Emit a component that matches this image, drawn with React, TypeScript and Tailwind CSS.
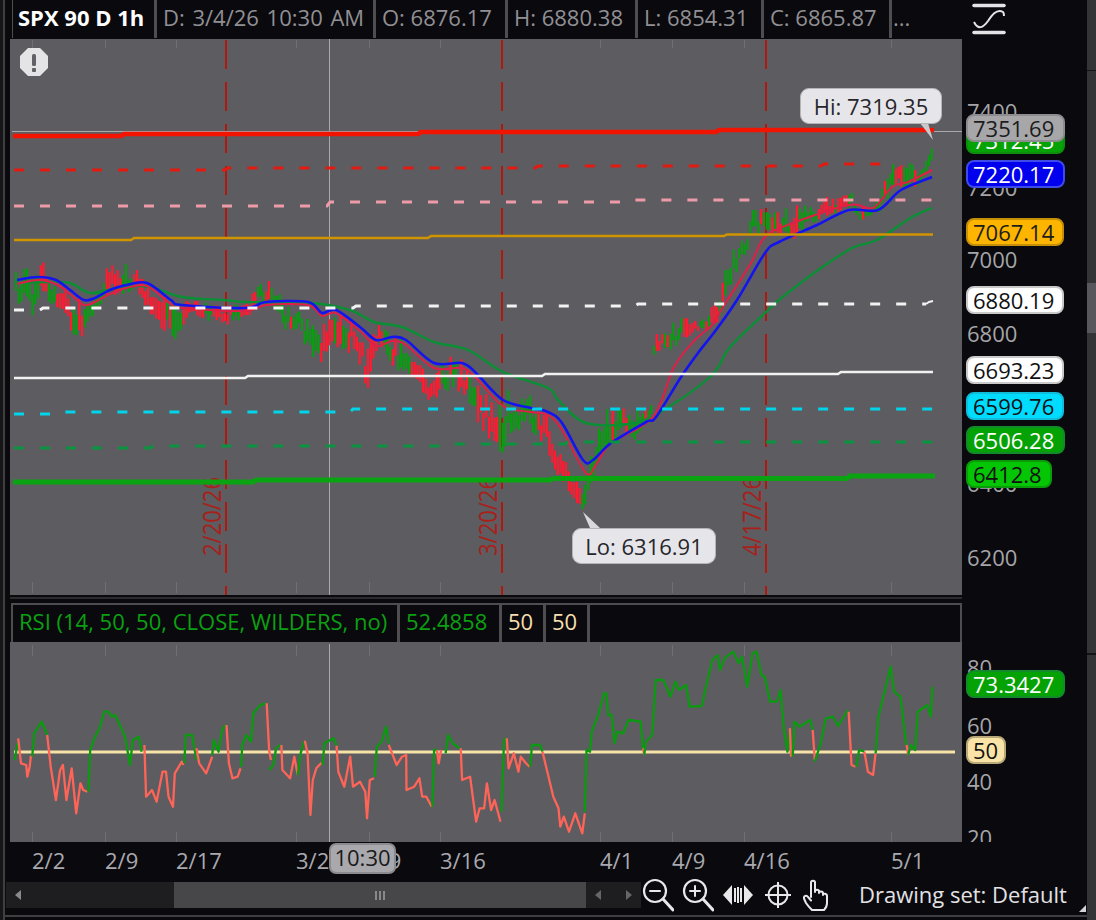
import React from "react";

type P = [number, number];
const smooth = (pts: P[]) => {
  let d = `M${pts[0][0]} ${pts[0][1]}`;
  for (let i = 0; i < pts.length - 1; i++) {
    const p0 = pts[Math.max(0, i - 1)];
    const p1 = pts[i];
    const p2 = pts[i + 1];
    const p3 = pts[Math.min(pts.length - 1, i + 2)];
    const c1x = p1[0] + (p2[0] - p0[0]) / 6;
    const c1y = p1[1] + (p2[1] - p0[1]) / 6;
    const c2x = p2[0] - (p3[0] - p1[0]) / 6;
    const c2y = p2[1] - (p3[1] - p1[1]) / 6;
    d += ` C${c1x.toFixed(1)} ${c1y.toFixed(1)} ${c2x.toFixed(1)} ${c2y.toFixed(1)} ${p2[0]} ${p2[1]}`;
  }
  return d;
};
const steps = (segs: [number, number][], start = 14) => {
  let out = "";
  let x = start;
  segs.forEach(([end, y], i) => {
    out += `${i ? "L" : "M"}${x} ${y} L${end} ${y} `;
    x = end + 3;
  });
  return out;
};

const BLUE: P[] = [[17,280],[38,277],[56,280],[70,290],[84,300],[95,298],[110,290],[126,285],[147,283],[171,300],[182,305],[245,308],[266,302],[308,302],[322,313],[336,310],[360,327],[376,340],[392,337],[406,340],[434,363],[462,363],[476,373],[503,400],[531,408],[548,412],[562,423],[583,460],[593,460],[611,443],[646,422],[656,417],[681,377],[698,353],[716,330],[737,300],[765,253],[779,242],[817,225],[849,210],[878,210],[901,190],[932,177]];
const CRIMSON: P[] = [[17,284],[38,280],[56,284],[70,294],[84,305],[95,302],[110,294],[126,288],[147,286],[171,304],[182,308],[245,311],[266,305],[308,305],[322,316],[336,313],[360,331],[376,346],[392,341],[406,345],[434,368],[462,368],[476,378],[503,406],[531,412],[548,415],[562,430],[586,473],[597,463],[611,443],[653,417],[674,367],[695,340],[712,325],[723,307],[751,263],[765,237],[793,223],[849,205],[873,208],[892,187],[908,182],[932,170]];
const GREEN: P[] = [[14,283],[45,282],[70,283],[91,293],[122,287],[150,287],[182,297],[224,300],[245,302],[311,303],[350,310],[374,322],[402,327],[434,342],[468,350],[503,372],[548,388],[558,400],[586,423],[635,423],[667,408],[712,375],[730,347],[765,313],[779,300],[814,273],[852,248],[877,240],[912,217],[932,208]];

const ENV: [number, number, number][] = [[16,272,300],[30,265,320],[45,262,300],[60,280,310],[75,290,340],[85,300,340],[95,290,310],[105,265,300],[120,262,295],[135,262,290],[148,275,310],[160,295,330],[175,300,340],[190,300,315],[210,300,322],[230,305,325],[250,295,315],[262,278,305],[270,280,300],[285,300,330],[300,305,330],[312,325,367],[320,320,365],[330,300,350],[345,305,350],[360,340,365],[368,345,395],[380,320,345],[395,330,370],[410,350,375],[425,365,400],[435,375,400],[450,352,390],[465,360,395],[478,385,425],[490,395,440],[503,385,455],[515,395,430],[530,395,430],[545,405,445],[555,430,470],[565,460,495],[578,480,505],[585,470,512],[592,450,480],[598,430,470],[605,408,450],[620,400,435],[635,400,440],[651,400,420],[654,335,355],[670,325,350],[685,315,340],[700,320,330],[715,300,330],[725,260,300],[740,240,265],[755,205,235],[765,208,235],[780,210,235],[795,205,240],[810,205,225],[830,195,215],[850,190,210],[860,205,220],[875,205,218],[885,180,205],[895,160,185],[905,160,190],[915,165,190],[925,160,175],[932,142,165]];

const envAt = (x: number): [number, number] => {
  for (let i = 0; i < ENV.length - 1; i++) {
    const a = ENV[i];
    const b = ENV[i + 1];
    if (x >= a[0] && x <= b[0]) {
      const t = (x - a[0]) / (b[0] - a[0]);
      return [a[1] + (b[1] - a[1]) * t, a[2] + (b[2] - a[2]) * t];
    }
  }
  return [ENV[ENV.length - 1][1], ENV[ENV.length - 1][2]];
};

const REDS: P[] = [[410, 440], [478, 498], [545, 582], [140, 165], [360, 368]];
const GREENS: P[] = [[584, 612], [725, 760], [312, 320], [95, 105], [928, 933]];
const within = (x: number, list: P[]) => list.some(([a, b]) => x >= a && x <= b);

const makeCandles = () => {
  let s = 12345;
  const rnd = () => {
    s = (s * 1664525 + 1013904223) >>> 0;
    return s / 4294967296;
  };
  const out: { x: number; top: number; h: number; up: boolean }[] = [];
  let up = false;
  for (let x = 16; x <= 932; x += 2.75) {
    const [t, b] = envAt(x);
    if (rnd() < 0.28) up = !up;
    const skew = rnd();
    const a1 = t + (b - t) * skew * 0.6;
    const a2 = b - (b - t) * (1 - skew) * 0.6 * rnd();
    const forced = within(x, REDS) ? false : within(x, GREENS) ? true : up;
    out.push({ x, top: a1, h: Math.max(3, a2 - a1), up: forced });
  }
  return out;
};
const CANDLES = makeCandles();

const R1: [string, number[]][] = [
  ["g",[42,480,50,430]],
  ["r",[52,415,60,490,75,495,78,530,85,500,88,470,92,470]],
  ["g",[92,470,98,400,110,380,120,365,135,405]],
  ["r",[135,405,145,500,160,600,172,510,180,495,190,600,205,505,218,640,230,550,238,570,250,575]],
  ["g",[253,575,258,450,270,415,285,385,298,335,310,335,320,350,330,345,345,380,358,410,372,495,380,420,397,410,405,455]],
  ["r",[413,435,418,590,435,570,448,605,465,515,475,515,482,590,495,620,500,520,520,485,525,495]],
  ["g",[527,490,532,405,550,405,562,480]],
  ["r",[562,445,570,490,590,520,607,470]],
  ["g",[607,465,612,420,625,455,635,390,645,375]],
  ["r",[648,375,655,490,665,535,680,530,688,505]],
  ["g",[690,500,693,435,705,405,718,425,725,340,745,315,762,310]],
  ["r",[763,310,770,450,775,480]],
  ["g",[770,510,782,495,790,445,802,435]],
  ["r",[805,435,808,510,830,535,842,470,852,525]],
  ["g",[852,525,860,460,870,425]],
  ["r",[872,422,880,460,888,645,895,540,905,505,920,488]],
  ["g",[923,495,928,430,945,420,955,415,963,437]],
  ["r",[963,437,968,515,985,560,1002,470,1010,560,1030,545,1045,575,1050,655,1058,540,1070,535]],
  ["g",[1072,530,1078,440,1092,425,1105,380,1112,430]],
  ["r",[1112,435,1135,495,1150,470,1162,465,1163,570,1185,560,1200,535,1208,590,1220,590,1235,620]],
  ["g",[1237,620,1242,450,1250,450]],
  ["r",[1250,450,1255,490,1262,450]],
  ["g",[1275,460,1282,405,1295,430,1315,445]],
  ["r",[1318,445,1322,540,1345,530,1362,665,1372,625,1385,625,1393,550,1405,630,1415,600,1432,665]],
  ["g",[1435,635,1442,420,1450,415]],
  ["r",[1450,415,1455,505,1470,460,1483,515,1490,470,1505,490,1515,500]],
  ["g",[1517,500,1522,435,1545,435,1552,455]],
  ["r",[1552,455,1568,525]],
];
const R2: [string, number[]][] = [
  ["r",[0,525,15,590,30,625,35,680,45,650,60,695,78,640,98,700,105,640]],
  ["g",[105,635,110,450,120,455,125,395,145,340,160,280,167,280,172,345,182,345,190,430,198,395,215,400,230,360,265,365,272,450]],
  ["r",[272,445,275,465]],
  ["g",[275,465,280,425,298,405,308,240,330,240,350,290,365,245,375,270,395,255,405,320,440,318,450,270,470,180,485,165,492,210,505,175,530,155,545,190,555,170,570,260,585,160,597,155,610,225,620,230,635,305,655,305,665,270,675,390,685,455,692,385]],
  ["r",[692,385,695,470]],
  ["g",[700,470,705,365,720,380,750,360,757,390]],
  ["r",[757,390,763,480]],
  ["g",[763,485,780,430,795,355,815,350,830,378,858,330]],
  ["r",[860,335,868,495,880,500]],
  ["g",[882,500,890,450,905,455]],
  ["r",[905,455,915,515,930,525,937,460]],
  ["g",[937,460,945,350,965,265,980,200,990,275,1008,290,1025,435]],
  ["r",[1026,435,1030,465]],
  ["g",[1030,465,1038,435,1050,450,1058,335,1085,315,1095,350,1100,260]],
];
const toPts = (a: number[], off: number) => {
  let d = "";
  for (let i = 0; i < a.length; i += 2) {
    d += `${i ? "L" : "M"}${((a[i] + off) / 2.861).toFixed(1)} ${(600 + a[i + 1] / 3).toFixed(1)} `;
  }
  return d;
};

const TICKS = [32, 105, 176, 296, 369, 440, 600, 672, 744, 891];

const PriceChart = () => (
  <svg className="block w-[952px] h-[556px]" viewBox="10 39 952 556">
    <defs>
      <clipPath id="vtext"><rect x="10" y="476" width="952" height="100" /></clipPath>
    </defs>
    {TICKS.map((x) => (
      <g key={x} stroke="#706f73" strokeWidth="1">
        <line x1={x + 0.5} x2={x + 0.5} y1="40" y2="48" />
        <line x1={x + 0.5} x2={x + 0.5} y1="582" y2="593" />
      </g>
    ))}
    {[226, 502, 766].map((x) => (
      <line key={x} x1={x} x2={x} y1="40" y2="595" stroke="#b0180e" strokeWidth="2" strokeDasharray="29 13" />
    ))}
    <line x1="329.5" x2="329.5" y1="39" y2="595" stroke="#a9a9ac" strokeWidth="1" />
    <g clipPath="url(#vtext)" fill="#a9201a" fontFamily="'Open Sans', sans-serif" fontSize="22">
      <text transform="translate(221 556) rotate(-90) scale(1 1.14)">2/20/26</text>
      <text transform="translate(497 556) rotate(-90) scale(1 1.14)">3/20/26</text>
      <text transform="translate(761 556) rotate(-90) scale(1 1.14)">4/17/26</text>
    </g>
    {CANDLES.map((c) => (
      <rect key={c.x} x={c.x - 1.1} y={c.top} width="2.2" height={c.h} fill={c.up ? "#0a9c12" : "#ff1c30"} />
    ))}
    <path d={smooth(GREEN)} fill="none" stroke="#0a8f35" strokeWidth="2.4" />
    <path d={smooth(CRIMSON)} fill="none" stroke="#e01f48" strokeWidth="2" />
    <path d={smooth(BLUE)} fill="none" stroke="#1414f0" strokeWidth="2.6" />
    <line x1="12" x2="962" y1="131.5" y2="131.5" stroke="#a9a9ac" strokeWidth="1" />
    <path d={steps([[121,136],[418,134],[716,132],[934,130]], 13)} fill="none" stroke="#f21400" strokeWidth="4.6" />
    <path d={steps([[225,170],[535,168],[821,166],[892,164]])} fill="none" stroke="#e21a10" strokeWidth="3" strokeDasharray="10 16" />
    <path d={steps([[327,206],[622,202],[933,200]])} fill="none" stroke="#ee9aa8" strokeWidth="3" strokeDasharray="10 16" />
    <path d={steps([[131,240],[428,238],[724,236],[933,234.5]])} fill="none" stroke="#cf9400" strokeWidth="2.5" />
    <path d={steps([[40,310],[353,308],[635,306],[926,304]])} fill="none" stroke="#f2f2f2" strokeWidth="3" strokeDasharray="10 16" />
    <path d="M926 304 L929 302 L933 301" fill="none" stroke="#f2f2f2" strokeWidth="2" />
    <path d={steps([[245,378],[542,376],[838,374],[933,372]])} fill="none" stroke="#f2f2f2" strokeWidth="2.5" />
    <path d={steps([[50,414],[350,412],[933,409]])} fill="none" stroke="#00d4ea" strokeWidth="3" strokeDasharray="10 16" />
    <path d={steps([[150,448],[450,446],[565,444],[933,442]])} fill="none" stroke="#0a9440" strokeWidth="3" strokeDasharray="10 16" />
    <path d={steps([[253,482],[550,480],[847,478.5],[935,476]], 13)} fill="none" stroke="#0aa312" strokeWidth="5" />
    <path d="M920 123 L928 123 L933 140 Z" fill="#c9c9cd" />
    <path d="M590 528 L600 528 L583 512 Z" fill="#d9d9dd" />
    <polygon points="28,48 40,48 48,56 48,68 40,76 28,76 20,68 20,56" fill="#e4e4e7" />
    <rect x="32" y="54" width="4" height="12" rx="1.5" fill="#626165" />
    <rect x="32" y="68" width="4" height="4" rx="1" fill="#626165" />
  </svg>
);

const RsiChart = () => (
  <svg className="block w-[952px] h-[200px]" viewBox="10 642 952 200">
    {TICKS.map((x) => (
      <g key={x} stroke="#706f73" strokeWidth="1">
        <line x1={x + 0.5} x2={x + 0.5} y1="645" y2="656" />
        <line x1={x + 0.5} x2={x + 0.5} y1="832" y2="842" />
      </g>
    ))}
    <line x1="329.5" x2="329.5" y1="644" y2="842" stroke="#a9a9ac" strokeWidth="1" />
    <line x1="14" x2="955" y1="752" y2="752" stroke="#f6e3a8" strokeWidth="3" />
    {R1.map(([c, a], i) => (
      <path key={i} d={toPts(a, 0)} fill="none" stroke={c === "g" ? "#0a9a10" : "#ff6458"} strokeWidth="2.3" strokeLinejoin="round" />
    ))}
    {R2.map(([c, a], i) => (
      <path key={i} d={toPts(a, 1568)} fill="none" stroke={c === "g" ? "#0a9a10" : "#ff6458"} strokeWidth="2.3" strokeLinejoin="round" />
    ))}
  </svg>
);

const TAGS = [
  { t: "7312.45", c: "top-[126px] w-[99px] bg-[#06a306] border-[#0d8f0d] text-white" },
  { t: "7351.69", c: "top-[114px] w-[99px] bg-[#a7a6a9] border-[#8d8c90] text-[#1c1c1c]" },
  { t: "7220.17", c: "top-[160px] w-[99px] bg-[#0000ee] border-[#3f4be6] text-white" },
  { t: "7067.14", c: "top-[218px] w-[98px] bg-[#fdb500] border-[#c58f08] text-[#1c1c1c]" },
  { t: "6880.19", c: "top-[286px] w-[98px] bg-white border-[#c9c9c9] text-[#111]" },
  { t: "6693.23", c: "top-[356px] w-[98px] bg-white border-[#c9c9c9] text-[#111]" },
  { t: "6599.76", c: "top-[392px] w-[98px] bg-[#00dcff] border-[#10bcd8] text-[#111]" },
  { t: "6506.28", c: "top-[426px] w-[99px] bg-[#05a205] border-[#128c2a] text-white" },
  { t: "6412.8", c: "top-[460px] w-[86px] bg-[#05c605] border-[#0a9a0a] text-[#111]" },
  { t: "73.3427", c: "top-[670px] w-[99px] bg-[#05a205] border-[#128c2a] text-white" },
  { t: "50", c: "top-[736px] w-[40px] bg-[#f9e3a6] border-[#b9a878] text-[#111]" },
];

const SCALE = [
  { t: "7400", c: "top-[100px]" },
  { t: "7200", c: "top-[176px]" },
  { t: "7000", c: "top-[248px]" },
  { t: "6800", c: "top-[322px]" },
  { t: "6400", c: "top-[472px]" },
  { t: "6200", c: "top-[546px]" },
  { t: "80", c: "top-[656px]" },
  { t: "60", c: "top-[714px]" },
  { t: "40", c: "top-[770px]" },
  { t: "20", c: "top-[826px]" },
];

const TIME = [
  { t: "2/2", c: "left-[22px]" },
  { t: "2/9", c: "left-[95px]" },
  { t: "2/17", c: "left-[166px]" },
  { t: "3/2", c: "left-[286px]" },
  { t: "3/9", c: "left-[358px]" },
  { t: "3/16", c: "left-[430px]" },
  { t: "4/1", c: "left-[590px]" },
  { t: "4/9", c: "left-[662px]" },
  { t: "4/16", c: "left-[734px]" },
  { t: "5/1", c: "left-[881px]" },
];

const Cell = ({ w, c, children }: { w: string; c: string; children?: React.ReactNode }) => (
  <div className={`${w} h-full shrink-0 flex items-center border-r-[3px] border-[#4e4e50] pl-[6px] whitespace-nowrap ${c}`}>{children}</div>
);

const IconZoom = ({ plus }: { plus?: boolean }) => (
  <svg className="w-[32px] h-[34px]" viewBox="0 0 32 34" fill="none" stroke="#e8e8ea" strokeLinecap="round">
    <circle cx="13" cy="13" r="11" strokeWidth="2.2" />
    <line x1="21" y1="21" x2="31" y2="32" strokeWidth="3" />
    <line x1="8" y1="13" x2="18" y2="13" strokeWidth="2" />
    {plus && <line x1="13" y1="8" x2="13" y2="18" strokeWidth="2" />}
  </svg>
);
const IconPan = () => (
  <svg className="w-[30px] h-[24px]" viewBox="0 0 30 24" fill="#e8e8ea">
    <polygon points="0,12 9,2 9,22" />
    <polygon points="30,12 21,2 21,22" />
    <rect x="11" y="5" width="2" height="14" />
    <rect x="14" y="4" width="2" height="16" />
    <rect x="17" y="5" width="2" height="14" />
  </svg>
);
const IconCross = () => (
  <svg className="w-[26px] h-[26px]" viewBox="0 0 26 26" fill="none" stroke="#e8e8ea" strokeWidth="2">
    <circle cx="13" cy="13" r="9.5" />
    <line x1="13" y1="0" x2="13" y2="26" />
    <line x1="0" y1="13" x2="26" y2="13" />
  </svg>
);
const IconHand = () => (
  <svg className="w-[26px] h-[32px]" viewBox="0 0 26 32" fill="none" stroke="#e8e8ea" strokeWidth="2" strokeLinejoin="round" strokeLinecap="round">
    <path d="M8 18V3.5C8 1 12 1 12 3.5V13M12 12.5C12 10 16 10 16 12.5V14M16 14C16 12 20 12 20 14.5V16M20 16C20 14 24 14.5 24 17V24C24 27 23 29 21 31H9C7 29 5 27 3 24L1 19.5C0.5 17 3.5 15.5 5 18L8 21.5" />
  </svg>
);

export default function App() {
  return (
    <div className="w-[1096px] h-[920px] bg-[#0a090d] overflow-hidden flex font-['Open_Sans',sans-serif] text-[22px] leading-none">
      <div className="w-[5px] h-full shrink-0 flex">
        <div className="w-[3px] bg-[#161518]" />
        <div className="w-[2px] bg-[#3f3e41]" />
      </div>
      <div className="w-[1082px] shrink-0 flex flex-col">
        <div className="h-[882px] flex">
          <div className="w-[5px] shrink-0" />
          <div className="w-[952px] shrink-0 flex flex-col">
            <div className="h-[38px] ml-[2px] flex pb-[4px] text-[#919094] border-l-[1px] border-[#4e4e50]">
              <div className="w-[144px] -mb-[4px] pb-[4px] flex items-center shrink-0 border-r-[3px] border-[#4e4e50] pl-[5px] whitespace-nowrap font-bold text-[22px] text-white">SPX 90 D 1h</div>
              <div className="w-[219px] -mb-[4px] pb-[4px] flex items-center shrink-0 border-r-[3px] border-[#4e4e50] pl-[6px] whitespace-nowrap [word-spacing:2px]">D: 3/4/26 10:30 AM</div>
              <div className="w-[132px] -mb-[4px] pb-[4px] flex items-center shrink-0 border-r-[3px] border-[#4e4e50] pl-[6px] whitespace-nowrap">O: 6876.17</div>
              <div className="w-[130px] -mb-[4px] pb-[4px] flex items-center shrink-0 border-r-[3px] border-[#4e4e50] pl-[6px] whitespace-nowrap">H: 6880.38</div>
              <div className="w-[126px] -mb-[4px] pb-[4px] flex items-center shrink-0 border-r-[3px] border-[#4e4e50] pl-[6px] whitespace-nowrap">L: 6854.31</div>
              <div className="w-[128px] -mb-[4px] pb-[4px] flex items-center shrink-0 border-r-[3px] border-[#4e4e50] pl-[6px] whitespace-nowrap">C: 6865.87</div>
              <div className="pl-[1px] flex items-center">...</div>
            </div>
            <div className="h-[1px]" />
            <div className="relative h-[556px] bg-[#5d5c60]">
              <PriceChart />
              <div className="absolute left-[790px] top-[49px] w-[142px] h-[36px] rounded-[9px] bg-[#e6e6ea] border border-[#b5b5b8] flex items-center justify-center text-[#26262a]">Hi: 7319.35</div>
              <div className="absolute left-[562px] top-[489px] w-[144px] h-[36px] rounded-[9px] bg-[#e6e6ea] border border-[#b5b5b8] flex items-center justify-center text-[#26262a]">Lo: 6316.91</div>
            </div>
            <div className="h-[2px] mt-[2px] bg-[#2c2b2e]" />
            <div className="h-[4px]" />
            <div className="h-[39px] ml-[1px] flex border-t-[2px] border-r-[2px] border-l-[2px] border-[#4e4e50] text-[#0aa012]">
              <Cell w="w-[387px]" c="pb-[5px]">RSI (14, 50, 50, CLOSE, WILDERS, no)</Cell>
              <Cell w="w-[102px]" c="pb-[5px]">52.4858</Cell>
              <Cell w="w-[44px]" c="pb-[5px] text-[#f6dfae]">50</Cell>
              <Cell w="w-[44px]" c="pb-[5px] text-[#f6dfae]">50</Cell>
            </div>
            <div className="h-[200px] bg-[#5d5c60]">
              <RsiChart />
            </div>
            <div className="relative h-[40px] text-[#a9a9b0]">
              {TIME.map((l) => (
                <span key={l.t} className={`absolute top-[7px] ${l.c}`}>{l.t}</span>
              ))}
              <div className="absolute left-[319px] top-[1px] w-[67px] h-[31px] rounded-[7px] bg-[#a9a8ad] border-2 border-[#8b8a8f] flex items-center justify-center pb-[3px] text-[#1a1a1a]">10:30</div>
            </div>
          </div>
          <div className="relative w-[125px] shrink-0">
            <div className="relative h-[842px] overflow-hidden">
              <svg className="absolute left-[10px] top-[3px] w-[34px] h-[32px]" viewBox="0 0 34 32" fill="none" stroke="#e4e4e6">
                <line x1="2" x2="32" y1="2.5" y2="2.5" strokeWidth="3.5" strokeLinecap="round" />
                <line x1="2" x2="32" y1="29.5" y2="29.5" strokeWidth="3.5" strokeLinecap="round" />
                <path d="M2 19 C6 27 11 25 16 18 C21 10 26 6 31 9 C32 10 32 12 32 13" strokeWidth="2" />
              </svg>
              {SCALE.map((l) => (
                <span key={l.t} className={`absolute left-[5px] text-[#a5a5a9] ${l.c}`}>{l.t}</span>
              ))}
              {TAGS.map((l) => (
                <div key={l.t} className={`absolute left-[4px] h-[28px] rounded-[8px] border-2 flex items-center pl-[5px] ${l.c}`}>{l.t}</div>
              ))}
            </div>
          </div>
        </div>
        <div className="h-[26px] flex items-center">
          <div className="w-[635px] h-full ml-[1px] flex items-center bg-[#1e1d20] shrink-0">
            <div className="w-[168px] h-full flex items-center pl-[9px] shrink-0">
              <span className="w-0 h-0 border-y-[5px] border-y-transparent border-r-[6px] border-r-[#8a8a8e]" />
            </div>
            <div className="w-[412px] h-full bg-[#474649] flex items-center justify-center gap-[2px] shrink-0">
              <span className="w-[2px] h-[9px] bg-[#88888c]" />
              <span className="w-[2px] h-[9px] bg-[#88888c]" />
              <span className="w-[2px] h-[9px] bg-[#88888c]" />
            </div>
            <div className="flex-1 flex items-center justify-between px-[9px]">
              <span className="w-0 h-0 border-y-[5px] border-y-transparent border-r-[6px] border-r-[#66656a]" />
              <span className="w-0 h-0 border-y-[5px] border-y-transparent border-l-[6px] border-l-[#66656a]" />
            </div>
          </div>
          <div className="flex items-center shrink-0 -ml-[3px] text-[#e2e2e5]">
            <div className="w-[40px] flex justify-center"><IconZoom /></div>
            <div className="w-[40px] flex justify-center"><IconZoom plus /></div>
            <div className="w-[40px] flex justify-center"><IconPan /></div>
            <div className="w-[40px] flex justify-center"><IconCross /></div>
            <div className="w-[36px] flex justify-center"><IconHand /></div>
            <span className="ml-[25px] pb-[2px] whitespace-nowrap">Drawing set: Default</span>
          </div>
        </div>
        <div className="flex-1 relative">
          <div className="absolute left-0 right-0 bottom-[3px] h-[2px] bg-[#3f3e41]" />
          <span className="absolute right-[1px] top-[-3px] w-0 h-0 border-b-[7px] border-b-[#d4d4d8] border-l-[7px] border-l-transparent" />
        </div>
      </div>
      <div className="w-[9px] shrink-0 flex flex-col bg-[#343336]">
        <div className="h-[70px]" />
        <div className="h-[1px] bg-[#141316]" />
        <div className="h-[212px]" />
        <div className="h-[50px] bg-[#58575b]" />
        <div className="h-[320px]" />
        <div className="h-[2px] bg-[#141316]" />
      </div>
    </div>
  );
}
